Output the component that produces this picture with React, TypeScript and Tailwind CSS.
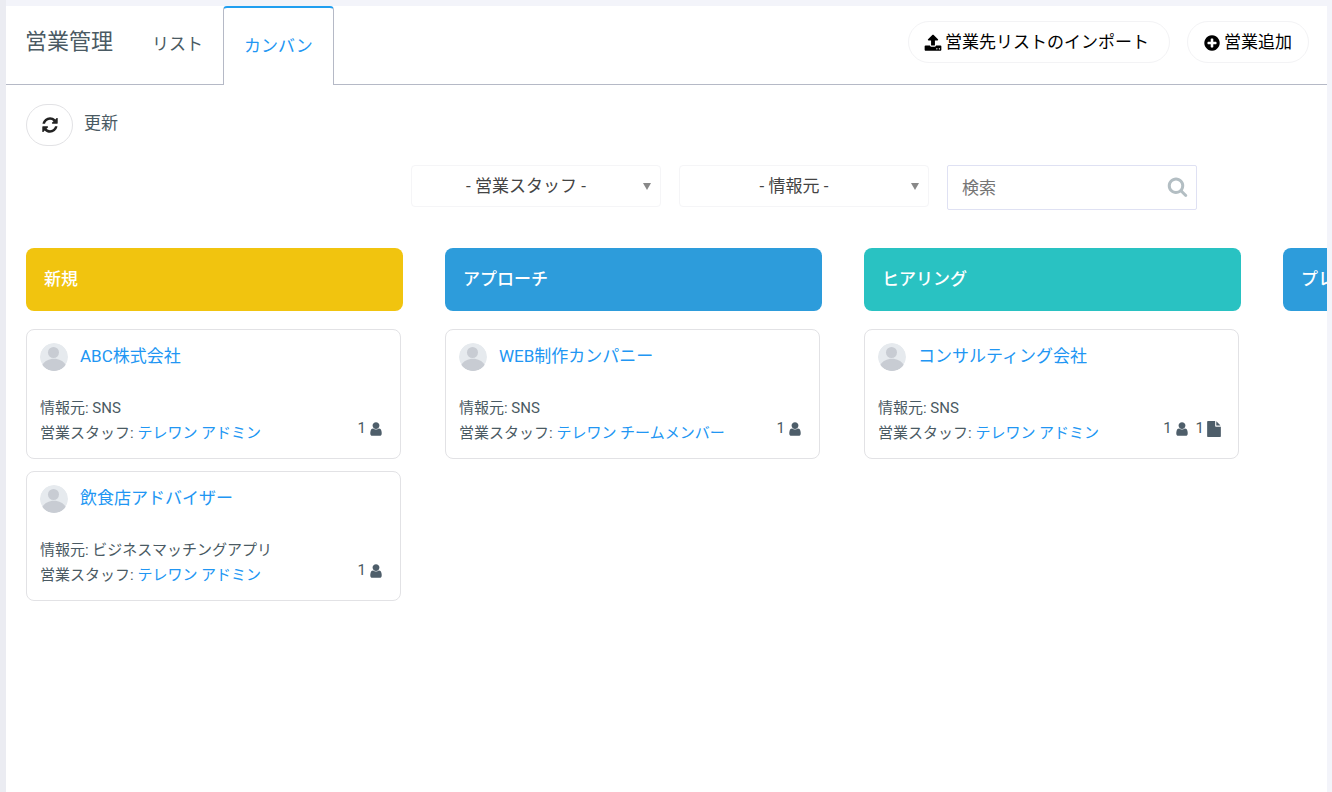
import { useState } from "react";

interface Deal {
  id: number;
  company: string;
  source: string;
  staff: string;
  contacts: number;
  files?: number;
}

interface Stage {
  id: number;
  title: string;
  color: string;
  deals: Deal[];
}

const stages: Stage[] = [
  {
    id: 1,
    title: "新規",
    color: "bg-[#f1c40f]",
    deals: [
      { id: 1, company: "ABC株式会社", source: "SNS", staff: "テレワン アドミン", contacts: 1 },
      {
        id: 2,
        company: "飲食店アドバイザー",
        source: "ビジネスマッチングアプリ",
        staff: "テレワン アドミン",
        contacts: 1,
      },
    ],
  },
  {
    id: 2,
    title: "アプローチ",
    color: "bg-[#2d9cdb]",
    deals: [
      { id: 3, company: "WEB制作カンパニー", source: "SNS", staff: "テレワン チームメンバー", contacts: 1 },
    ],
  },
  {
    id: 3,
    title: "ヒアリング",
    color: "bg-[#29c2c2]",
    deals: [
      {
        id: 4,
        company: "コンサルティング会社",
        source: "SNS",
        staff: "テレワン アドミン",
        contacts: 1,
        files: 1,
      },
    ],
  },
  { id: 4, title: "プレゼン", color: "bg-[#2d9cdb]", deals: [] },
];

const icons = {
  upload:
    "M1344 1472q0-26-19-45t-45-19-45 19-19 45 19 45 45 19 45-19 19-45zm256 0q0-26-19-45t-45-19-45 19-19 45 19 45 45 19 45-19 19-45zm128-224v320q0 40-28 68t-68 28h-1472q-40 0-68-28t-28-68v-320q0-40 28-68t68-28h427q21 56 70.5 92t110.5 36h256q61 0 110.5-36t70.5-92h427q40 0 68 28t28 68zm-325-648q-17 40-59 40h-256v448q0 26-19 45t-45 19h-256q-26 0-45-19t-19-45v-448h-256q-42 0-59-40-17-39 14-69l448-448q18-19 45-19t45 19l448 448q31 30 14 69z",
  plus: "M1344 960v-128q0-26-19-45t-45-19h-256v-256q0-26-19-45t-45-19h-128q-26 0-45 19t-19 45v256h-256q-26 0-45 19t-19 45v128q0 26 19 45t45 19h256v256q0 26 19 45t45 19h128q26 0 45-19t19-45v-256h256q26 0 45-19t19-45zm320-64q0 209-103 385.5t-279.5 279.5-385.5 103-385.5-103-279.5-279.5-103-385.5 103-385.5 279.5-279.5 385.5-103 385.5 103 279.5 279.5 103 385.5z",
  refresh:
    "M1639 1056q0 5-1 7-64 268-268 434.5t-478 166.5q-146 0-282.5-55t-243.5-157l-129 129q-19 19-45 19t-45-19-19-45v-448q0-26 19-45t45-19h448q26 0 45 19t19 45-19 45l-137 137q71 66 161 102t187 36q134 0 250-65t186-179q11-17 53-117 8-23 30-23h192q13 0 22.5 9.5t9.5 22.5zm25-800v448q0 26-19 45t-45 19h-448q-26 0-45-19t-19-45 19-45l138-138q-148-137-349-137-134 0-250 65t-186 179q-11 17-53 117-8 23-30 23h-199q-13 0-22.5-9.5t-9.5-22.5v-7q65-268 270-434.5t480-166.5q146 0 284 55.5t245 156.5l130-129q19-19 45-19t45 19 19 45z",
  search:
    "M1216 832q0-185-131.5-316.5t-316.5-131.5-316.5 131.5-131.5 316.5 131.5 316.5 316.5 131.5 316.5-131.5 131.5-316.5zm512 832q0 52-38 90t-90 38q-54 0-90-38l-343-342q-179 124-399 124-143 0-273.5-55.5t-225-150-150-225-55.5-273.5 55.5-273.5 150-225 225-150 273.5-55.5 273.5 55.5 225 150 150 225 55.5 273.5q0 220-124 399l343 343q37 37 37 90z",
  user: "M1536 1399q0 109-62.5 187t-150.5 78h-854q-88 0-150.5-78t-62.5-187q0-85 8.5-160.5t31.5-152 58.5-131 94-89 134.5-34.5q131 128 313 128t313-128q76 0 134.5 34.5t94 89 58.5 131 31.5 152 8.5 160.5zm-256-887q0 159-112.5 271.5t-271.5 112.5-271.5-112.5-112.5-271.5 112.5-271.5 271.5-112.5 271.5 112.5 112.5 271.5z",
  file: "M1152 512v-472q22 14 36 28l408 408q14 14 28 36h-472zm-128 32q0 40 28 68t68 28h544v1056q0 40-28 68t-68 28h-1344q-40 0-68-28t-28-68v-1600q0-40 28-68t68-28h800v544z",
};

const Icon = ({ name, className }: { name: keyof typeof icons; className: string }) => (
  <svg viewBox="0 0 1792 1792" fill="currentColor" aria-hidden="true" className={className}>
    <path d={icons[name]} />
  </svg>
);

const Avatar = () => (
  <svg viewBox="0 0 28 28" aria-hidden="true" className="size-7 shrink-0 rounded-full">
    <circle cx="14" cy="14" r="14" fill="#e6eaee" />
    <circle cx="13.5" cy="9.5" r="5.5" fill="#c8ccd3" />
    <path d="M2 22.5C4.5 18 9 15.8 14 15.8S23.5 18 26 22.5C23.5 26 19 28 14 28S4.5 26 2 22.5Z" fill="#c8ccd3" />
  </svg>
);

interface FilterProps {
  label: string;
  placeholder: string;
  options: string[];
}

const Filter = ({ label, placeholder, options }: FilterProps) => {
  const [value, setValue] = useState("");

  return (
    <div className="relative w-[250px]">
      <select
        aria-label={label}
        value={value}
        onChange={(e) => setValue(e.target.value)}
        className="h-[42px] w-full appearance-none rounded-sm border border-[#f5f5f7] bg-white pt-[2px] pr-6 pl-1 text-[17px] text-[#444] [text-align-last:center]"
      >
        <option value="">{placeholder}</option>
        {options.map((option) => (
          <option key={option}>{option}</option>
        ))}
      </select>
      <svg viewBox="0 0 8 7" aria-hidden="true" className="pointer-events-none absolute top-[18px] right-[10px] h-[7px] w-2">
        <path d="M0 0h8L4 7z" fill="#888" />
      </svg>
    </div>
  );
};

const DealCard = ({ deal }: { deal: Deal }) => (
  <article className="mr-[2px] h-[130px] rounded-lg border border-[#e2e2e5] px-[13px] pt-[13px]">
    <div className="flex gap-3">
      <Avatar />
      <a href="#" className="text-[17px] leading-[26px] text-[#2196f3]">
        {deal.company}
      </a>
    </div>
    <div className="mt-[25px] flex items-end justify-between text-[15px] leading-[25px]">
      <div>
        <p>情報元: {deal.source}</p>
        <p>
          営業スタッフ:{" "}
          <a href="#" className="text-[#2196f3]">
            {deal.staff}
          </a>
        </p>
      </div>
      <div className="mr-[3px] mb-[5px] flex gap-[6px]">
        <span className="flex items-center gap-[2px]">
          {deal.contacts}
          <Icon name="user" className="size-4 text-[#4e5e6a]" />
        </span>
        {deal.files && (
          <span className="flex items-center gap-[2px]">
            {deal.files}
            <Icon name="file" className="size-4 text-[#4e5e6a]" />
          </span>
        )}
      </div>
    </div>
  </article>
);

export default function App() {
  const [search, setSearch] = useState("");

  return (
    <div className="min-h-screen overflow-hidden border-l-[6px] border-[#ebecf2] bg-[#f3f4fa] pt-[6px] pr-[5px] font-[Roboto,'Noto_Sans_CJK_JP',sans-serif] text-[#4a5a63]">
      <main className="min-h-[calc(100vh-6px)] bg-white">
        <header className="flex h-[79px] border-b border-[#b5b9c6]">
          <h1 className="pt-4 pl-[19px] text-[22px] leading-10">営業管理</h1>
          <nav className="ml-[19px] flex h-[79px]">
            <a href="#" className="px-5 pt-[25px] text-[17px] leading-[26px]">
              リスト
            </a>
            <a
              href="#"
              aria-current="page"
              className="rounded-t border-x border-t-2 border-x-[#b5b9c6] border-t-[#219ff0] bg-white px-5 pt-[25px] text-[17px] leading-[26px] text-[#2196f3]"
            >
              カンバン
            </a>
          </nav>
          <div className="mt-[15px] mr-[18px] ml-auto flex gap-[17px] text-[17px] text-black">
            <button className="flex h-[42px] items-center gap-[3px] rounded-full border border-[#f3f3f5] pt-px pr-5 pl-[15px]">
              <Icon name="upload" className="size-[18px]" />
              営業先リストのインポート
            </button>
            <button className="flex h-[42px] items-center gap-[3px] rounded-full border border-[#f3f3f5] pt-px pr-4 pl-[15px]">
              <Icon name="plus" className="size-[18px]" />
              営業追加
            </button>
          </div>
        </header>

        <div className="flex pt-[19px] pl-5">
          <button
            id="refresh"
            aria-labelledby="refresh-label"
            className="flex h-[42px] w-[47px] items-center justify-center rounded-full border border-[#e2e2e5] text-[#222]"
          >
            <Icon name="refresh" className="size-[18px]" />
          </button>
          <label id="refresh-label" htmlFor="refresh" className="ml-[11px] pt-[6px] text-[17px] leading-[26px]">
            更新
          </label>
        </div>

        <div className="mt-[19px] flex justify-end gap-[18px] pr-[130px]">
          <Filter
            label="営業スタッフ"
            placeholder="- 営業スタッフ -"
            options={["テレワン アドミン", "テレワン チームメンバー"]}
          />
          <Filter label="情報元" placeholder="- 情報元 -" options={["SNS", "ビジネスマッチングアプリ"]} />
          <div className="relative w-[250px]">
            <input
              type="text"
              aria-label="検索"
              placeholder="検索"
              value={search}
              onChange={(e) => setSearch(e.target.value)}
              className="h-[45px] w-full rounded-xs border border-[#dfe1f3] pr-10 pl-[14px] text-[17px] placeholder:text-[#757575]"
            />
            <Icon name="search" className="absolute top-[11px] right-[9px] size-[21px] text-[#b3bec3]" />
          </div>
        </div>

        <div className="mt-[38px] flex gap-[42px] overflow-hidden pl-5">
          {stages.map((stage) => (
            <section key={stage.id} className="w-[377px] shrink-0">
              <h2 className={`h-[63px] rounded-lg px-[18px] text-[17px] leading-[62px] font-medium text-white ${stage.color}`}>
                {stage.title}
              </h2>
              <div className="mt-[18px] flex flex-col gap-3">
                {stage.deals.map((deal) => (
                  <DealCard key={deal.id} deal={deal} />
                ))}
              </div>
            </section>
          ))}
        </div>
      </main>
    </div>
  );
}
